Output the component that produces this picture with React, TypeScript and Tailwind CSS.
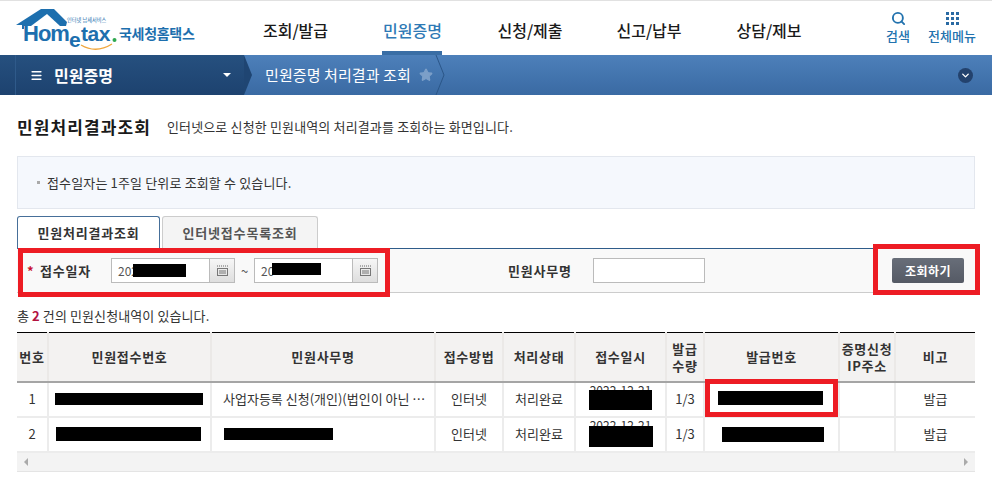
import { ChevronDown, Menu, Search, Star } from "lucide-react";

const FONT = "font-['Noto_Sans_CJK_KR','Liberation_Sans',sans-serif]";

const NAV = [
  { label: "조회/발급", width: "w-[117px]" },
  { label: "민원증명", width: "w-[117px]", active: true },
  { label: "신청/제출", width: "w-[118px]" },
  { label: "신고/납부", width: "w-[120px]" },
  { label: "상담/제보", width: "w-[120px]" },
];

const COLS = [31, 163, 224, 68, 72, 91, 38, 135, 56, 80];

function Logo() {
  return (
    <svg width="200" height="54" viewBox="0 0 200 54" className="shrink-0">
      <path d="M16 24 L41 8 L54 8 L67 21 L66 25 L24 25 L24 28 L22 28 L22 24 Z" fill="#1d6fae" />
      <path d="M31 25 L47 13 L60 25 Z" fill="#fff" />
      <text x="23" y="40" fontFamily="Liberation Sans" fontWeight="700" fontSize="22" letterSpacing="-1" fill="#1d6fae">
        Hom
      </text>
      <text x="69" y="46" fontFamily="Liberation Sans" fontWeight="700" fontSize="21" fill="#1d6fae">
        e
      </text>
      <text x="81" y="40" fontFamily="Liberation Sans" fontWeight="700" fontSize="21" letterSpacing="-0.4" fill="#1d6fae">
        tax
      </text>
      <circle cx="114.5" cy="39" r="2" fill="#2fa84f" />
      <path d="M81 44 Q96 53 112 43" fill="none" stroke="#f0a63c" strokeWidth="1.3" />
      <text x="67" y="20.5" fontFamily="Noto Sans CJK KR" fontSize="5.2" fill="#1d6fae">
        인터넷 납세서비스
      </text>
      <text x="119" y="38" fontFamily="Noto Sans CJK KR" fontWeight="700" fontSize="14" letterSpacing="-0.3" fill="#1d6fae">
        국세청홈택스
      </text>
    </svg>
  );
}

function Header() {
  return (
    <header className="flex h-[55px] items-stretch border-t border-[#e1e1e1] bg-white">
      <Logo />
      <nav className="ml-[37px] flex">
        {NAV.map((item) => (
          <a
            key={item.label}
            className={`relative flex ${item.width} justify-center pt-[17px] text-[16px] leading-[24px] font-medium ${
              item.active ? "text-[#2e79b5]" : "text-[#1a1a1a]"
            }`}
          >
            {item.label}
            {item.active && <span className="absolute right-[29px] bottom-0 left-[28px] h-[4px] bg-[#3a6ea5]" />}
          </a>
        ))}
      </nav>
      <div className="ml-[56px] flex w-[26px] flex-col items-center pt-[10px] text-[#2272ae]">
        <Search size={15} strokeWidth={3} />
        <span className="mt-[1px] text-[13px] leading-[18px] font-medium whitespace-nowrap">검색</span>
      </div>
      <div className="ml-[17px] flex w-[48px] flex-col items-center pt-[10px] text-[#2272ae]">
        <div className="grid grid-cols-3 gap-[2px] py-[1px]">
          {[1, 2, 3, 4, 5, 6, 7, 8, 9].map((n) => (
            <span key={n} className="h-[3px] w-[3px] bg-[#2a6aa3]" />
          ))}
        </div>
        <span className="mt-[1px] text-[13px] leading-[18px] font-medium whitespace-nowrap">전체메뉴</span>
      </div>
    </header>
  );
}

function Breadcrumb() {
  return (
    <div className="flex h-[40px] items-center bg-gradient-to-b from-[#4d80ba] to-[#3a6aa3]">
      <div className="relative flex h-full w-[244px] items-center bg-gradient-to-b from-[#26507f] to-[#1d426f] text-white">
        <span className="h-full w-[16px] border-r border-[#2f5a8a]" />
        <Menu size={13} strokeWidth={3} className="ml-[14px]" />
        <span className="ml-[11px] text-[16px] font-semibold">민원증명</span>
        <span className="ml-[110px] h-0 w-0 border-x-[4px] border-t-[4px] border-x-transparent border-t-white" />
        <svg width="9" height="40" viewBox="0 0 9 40" className="absolute top-0 -right-[9px]">
          <path d="M0 0 L8 20 L0 40 Z" fill="#1f4572" />
        </svg>
      </div>
      <div className="relative ml-[21px] flex h-full w-[178px] items-center text-[15px] text-white">
        <span className="tracking-[0.1px] whitespace-nowrap">민원증명 처리결과 조회</span>
        <Star size={14} fill="#7c9fc8" stroke="#7c9fc8" className="absolute right-[10px]" />
        <svg width="10" height="40" viewBox="0 0 10 40" className="absolute top-0 -right-[2px]">
          <path d="M1 0 L9 20 L1 40" fill="none" stroke="#2b5688" />
        </svg>
      </div>
      <span className="mr-[19px] ml-auto flex h-[15px] w-[15px] items-center justify-center rounded-full bg-[#23426d] text-white">
        <ChevronDown size={11} strokeWidth={3} />
      </span>
    </div>
  );
}

function DateField({ value, barClass }: { value: string; barClass: string }) {
  return (
    <div className="flex h-[25px] w-[124px]">
      <div className="relative flex w-[99px] items-center border border-[#bbb] bg-white pl-[6px] text-[12px] text-[#555]">
        {value}
        <span className={`absolute bg-black ${barClass}`} />
      </div>
      <div className="flex w-[25px] items-center justify-center border border-l-0 border-[#bbb] bg-gradient-to-b from-[#f6f6f6] to-[#dedede]">
        <svg width="13" height="12" viewBox="0 0 13 12">
          <path d="M1 1h11" stroke="#666" strokeDasharray="1 1" fill="none" />
          <rect x="1.5" y="3.5" width="10" height="7" fill="none" stroke="#777" />
          <path d="M3 6h7M3 8h7" stroke="#777" fill="none" />
        </svg>
      </div>
    </div>
  );
}

function SearchBar() {
  return (
    <div className="flex h-[45px] items-center border-t border-b border-t-[#2f5c8a] border-b-[#ccc] bg-[#f9f9f9] text-[13px]">
      <span className="ml-[10px] w-[13px] font-bold text-[#c8102e]">*</span>
      <span className="w-[71px] font-bold tracking-[0.8px] text-[#333]">접수일자</span>
      <DateField value="202" barClass="top-[5px] left-[21px] h-[13px] w-[53px]" />
      <span className="w-[19px] text-center text-[#555]">~</span>
      <DateField value="20" barClass="top-[4px] left-[17px] h-[12px] w-[49px]" />
      <span className="ml-[130px] w-[85px] font-bold tracking-[0.8px] text-[#333]">민원사무명</span>
      <div className="h-[25px] w-[112px] border border-[#bbb] bg-white" />
      <button className="mr-[11px] ml-auto h-[25px] w-[72px] rounded-[2px] bg-gradient-to-b from-[#686e79] to-[#555a65] text-[12px] font-bold tracking-[0.5px] text-white">
        조회하기
      </button>
    </div>
  );
}

function Bar({ className }: { className: string }) {
  return <span className={`absolute bg-black ${className}`} />;
}

function Th({ children }: { children: React.ReactNode }) {
  return (
    <th className="border-r-2 border-b-2 border-r-[#ebe9e7] border-b-[#a5a5a5] bg-[#f3f2f1] text-center text-[13px] leading-[17px] font-bold tracking-[0.7px] text-[#333] last:border-r-0">
      {children}
    </th>
  );
}

function Td({ children, className = "" }: { children?: React.ReactNode; className?: string }) {
  return (
    <td
      className={`relative h-[35px] border-r-2 border-b-2 border-[#ececec] text-center text-[13px] whitespace-nowrap text-[#333] last:border-r-0 ${className}`}
    >
      {children}
    </td>
  );
}

function ResultTable() {
  return (
    <div>
      <table className="w-[958px] table-fixed border-collapse border-t border-black">
        <colgroup>
          {COLS.map((w, i) => (
            <col key={i} style={{ width: w }} />
          ))}
        </colgroup>
        <thead>
          <tr className="h-[49px]">
            <Th>번호</Th>
            <Th>민원접수번호</Th>
            <Th>민원사무명</Th>
            <Th>접수방법</Th>
            <Th>처리상태</Th>
            <Th>접수일시</Th>
            <Th>
              발급
              <br />
              수량
            </Th>
            <Th>발급번호</Th>
            <Th>
              증명신청
              <br />
              IP주소
            </Th>
            <Th>비고</Th>
          </tr>
        </thead>
        <tbody>
          <tr>
            <Td>1</Td>
            <Td>
              <Bar className="top-[10px] left-[6px] h-[12px] w-[148px]" />
            </Td>
            <Td className="overflow-hidden pr-[8px] pl-[11px] text-left text-ellipsis">사업자등록 신청(개인)(법인이 아닌 단체)</Td>
            <Td>인터넷</Td>
            <Td>처리완료</Td>
            <Td className="overflow-hidden">
              <span className="relative -top-[9px] text-[12px]">2022-12-21</span>
              <Bar className="top-[7px] left-[13px] h-[20px] w-[63px]" />
            </Td>
            <Td>1/3</Td>
            <Td>
              <Bar className="top-[8px] left-[13px] h-[14px] w-[105px]" />
            </Td>
            <Td />
            <Td>발급</Td>
          </tr>
          <tr>
            <Td>2</Td>
            <Td>
              <Bar className="top-[9px] left-[7px] h-[14px] w-[145px]" />
            </Td>
            <Td>
              <Bar className="top-[10px] left-[12px] h-[12px] w-[109px]" />
            </Td>
            <Td>인터넷</Td>
            <Td>처리완료</Td>
            <Td className="overflow-hidden">
              <span className="relative -top-[9px] text-[12px]">2022-12-21</span>
              <Bar className="top-[8px] left-[13px] h-[21px] w-[64px]" />
            </Td>
            <Td>1/3</Td>
            <Td>
              <Bar className="top-[9px] left-[17px] h-[15px] w-[102px]" />
            </Td>
            <Td />
            <Td>발급</Td>
          </tr>
        </tbody>
      </table>
      <div className="flex h-[19px] items-center justify-between border-b border-[#e4e4e4] bg-[#f3f3f3] px-[7px]">
        <span className="h-0 w-0 border-y-[4px] border-r-[4px] border-y-transparent border-r-[#aaa]" />
        <span className="h-0 w-0 border-y-[4px] border-l-[4px] border-y-transparent border-l-[#aaa]" />
      </div>
    </div>
  );
}

export default function App() {
  return (
    <div className={`relative h-[479px] w-[992px] overflow-hidden bg-white ${FONT}`}>
      <Header />
      <Breadcrumb />
      <main className="px-[17px]">
        <div className="flex items-center pt-[20px]">
          <h1 className="text-[17px] leading-[24px] font-bold tracking-[1.1px] text-[#1a1a1a]">민원처리결과조회</h1>
          <p className="ml-[16px] text-[13px] tracking-[0.15px] text-[#333]">인터넷으로 신청한 민원내역의 처리결과를 조회하는 화면입니다.</p>
        </div>
        <div className="mt-[17px] flex h-[53px] items-center border border-[#e3e7ee] bg-[#f5f8fd] pl-[19px] text-[13px] tracking-[0.15px] text-[#333]">
          <span className="mr-[7px] h-[3px] w-[3px] bg-[#aaa]" />
          접수일자는 1주일 단위로 조회할 수 있습니다.
        </div>
        <div className="mt-[6px] flex h-[33px] items-end gap-[2px] text-[13px] font-bold tracking-[0.8px]">
          <div className="-mb-px flex h-[33px] w-[143px] items-center justify-center rounded-t-[3px] border border-b-0 border-[#466f99] bg-white text-[#333]">
            민원처리결과조회
          </div>
          <div className="flex h-[32px] w-[156px] items-center justify-center rounded-t-[3px] border border-b-0 border-[#ccc] bg-[#f4f4f4] text-[#555]">
            인터넷접수목록조회
          </div>
        </div>
        <SearchBar />
        <p className="mt-[14px] h-[18px] text-[13px] leading-[18px] tracking-[0.1px] text-[#333]">
          총 <b className="text-[#b3123f]">2</b> 건의 민원신청내역이 있습니다.
        </p>
        <div className="mt-[7px]">
          <ResultTable />
        </div>
      </main>

      <div className="absolute top-[248px] left-[18px] h-[49px] w-[372px] border-[5px] border-[#ed1c24]" />
      <div className="absolute top-[244px] left-[873px] h-[51px] w-[107px] border-[5px] border-[#ed1c24]" />
      <div className="absolute top-[379px] left-[705px] h-[38px] w-[133px] border-[5px] border-[#ed1c24]" />
    </div>
  );
}
